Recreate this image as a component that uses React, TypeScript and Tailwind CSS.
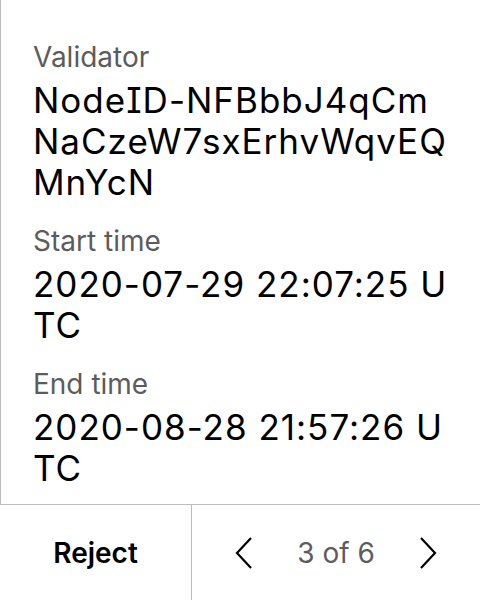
import React from "react";

const Field: React.FC<{ label: string; value: string }> = ({ label, value }) => (
  <div className="flex flex-col gap-[6px]">
    <div className="text-[28px] leading-[34px] text-[#5c5c5c]">{label}</div>
    <div className="text-[35px] leading-[41px] tracking-[1px] text-black break-all">{value}</div>
  </div>
);

const App: React.FC = () => {
  return (
    <div className="w-[480px] h-[600px] flex flex-col bg-white font-['Inter',sans-serif] [font-feature-settings:'cv08']">
      <div className="flex-1 flex flex-col gap-[21px] border-l border-[#bdbdbd] pl-[32px] pr-[30px] pt-[40px]">
        <Field label="Validator" value="NodeID-NFBbbJ4qCmNaCzeW7sxErhvWqvEQMnYcN" />
        <Field label="Start time" value="2020-07-29 22:07:25 UTC" />
        <Field label="End time" value="2020-08-28 21:57:26 UTC" />
      </div>
      <div className="h-[96px] flex border-t border-[#bdbdbd]">
        <button className="w-[192px] border-r border-[#bdbdbd] text-[28px] font-semibold text-black">
          Reject
        </button>
        <div className="flex-1 flex items-center justify-center gap-[44px]">
          <svg width="18" height="32" viewBox="0 0 18 32" fill="none" stroke="black" strokeWidth="2.2">
            <path d="M16 1 L2 16 L16 31" />
          </svg>
          <span className="text-[28px] text-[#5c5c5c]">3 of 6</span>
          <svg width="18" height="32" viewBox="0 0 18 32" fill="none" stroke="black" strokeWidth="2.2">
            <path d="M2 1 L16 16 L2 31" />
          </svg>
        </div>
      </div>
    </div>
  );
};

export default App;
